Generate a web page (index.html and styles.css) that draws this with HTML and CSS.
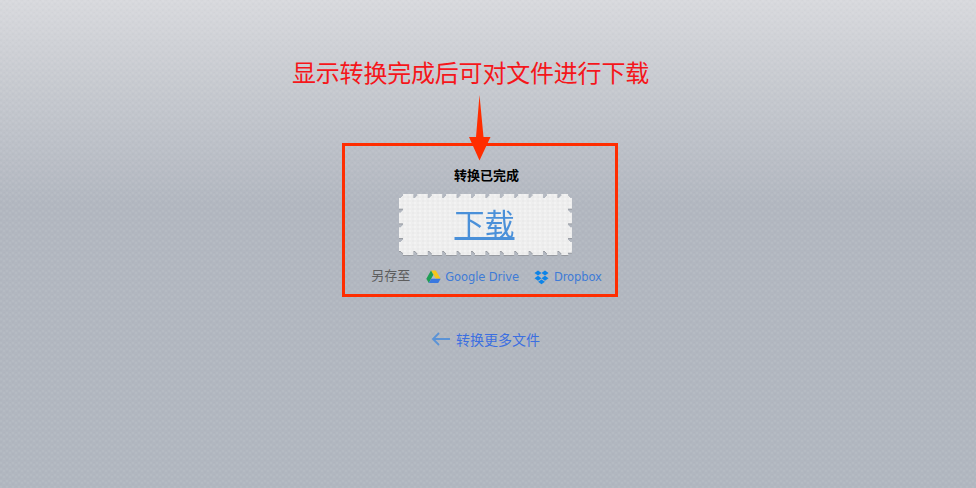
FILE: index.html
```html
<!DOCTYPE html>
<html lang="zh-CN">
<head>
<meta charset="utf-8">
<title>转换已完成</title>
<link rel="stylesheet" href="styles.css">
</head>
<body>
<main class="page">
  <h1 class="note">显示转换完成后可对文件进行下载</h1>
  <section class="box">
    <svg class="arrow" width="24" height="68" viewBox="0 0 24 68"><polygon points="10.500,0 14.500,42 21.500,42 10.500,65.500 0,42 7,42" fill="#ff2d00"/></svg>
    <p class="status">转换已完成</p>
    <a class="stamp" href="#"><span class="stamp-text">下载</span></a>
    <div class="saves">
      <span class="save-label">另存至</span>
      <a class="save" href="#">
        <svg width="15" height="14" viewBox="0 0 15 14"><polygon points="5,0.500 9.800,0.500 14.700,8.800 10,8.800" fill="#f6c61b"/><polygon points="5,0.500 7.400,4.700 2.800,13 0.300,8.800" fill="#1f9e55"/><polygon points="5.200,8.800 14.700,8.800 12.200,13 2.800,13" fill="#3a78e0"/></svg>
        Google Drive
      </a>
      <a class="save" href="#">
        <svg width="15" height="15" viewBox="0 0 15 15" fill="#0d84e8"><polygon points="4,0.500 7.500,3 4,5.500 0.500,3"/><polygon points="11,0.500 14.500,3 11,5.500 7.500,3"/><polygon points="4,5.700 7.500,8.200 4,10.700 0.500,8.200"/><polygon points="11,5.700 14.500,8.200 11,10.700 7.500,8.200"/><polygon points="7.500,9.400 10.900,11.700 7.500,14.200 4.100,11.700"/></svg>
        Dropbox
      </a>
    </div>
  </section>
  <a class="back" href="#">
    <svg width="19" height="14" viewBox="0 0 19 14" fill="none" stroke="#5b93d6" stroke-width="1.800"><path d="M19 7H2M8 1L2 7l6 6"/></svg>
    转换更多文件
  </a>
</main>
</body>
</html>
```
FILE: styles.css
```css
* { box-sizing: border-box; }
html, body { margin: 0; height: 100%; }
body {
  font-family: "DejaVu Sans", "Noto Sans CJK SC", sans-serif;
  background-color: #b1b7c0;
  background-image:
    radial-gradient(circle 1px at 1px 1px, rgba(255,255,255,.05) 99%, transparent),
    radial-gradient(circle 1px at 4px 3px, rgba(255,255,255,.05) 99%, transparent),
    radial-gradient(circle 1px at 1px 4px, rgba(60,70,90,.02) 99%, transparent),
    radial-gradient(circle 1px at 4px 0, rgba(60,70,90,.02) 99%, transparent),
    linear-gradient(#d8d9dd 0, #c6c9cf 90px, #b2b7c0 205px, #b1b7c0 100%);
  background-size: 6px 6px, 6px 6px, 6px 6px, 6px 6px, 100% 100%;
  overflow: hidden;
}
.page { display: flex; flex-direction: column; align-items: center; height: 488px; padding-top: 55px; }
.note {
  margin: 0 0 0 -35px;
  font-family: "Noto Sans CJK SC", sans-serif;
  font-size: 24px;
  line-height: 34px;
  font-weight: 400;
  letter-spacing: -.2px;
  color: #f5161b;
  white-space: nowrap;
}
.box {
  position: relative;
  width: 276px;
  height: 154px;
  margin: 54px 0 0 -16px;
  border: 3px solid #ff2d00;
  display: flex;
  flex-direction: column;
  align-items: center;
  padding: 20px 0 0 11px;
}
.arrow { position: absolute; left: 124px; top: -51px; }
.status { margin: 0 0 0 2px; font-family: "Noto Sans CJK SC", sans-serif; font-size: 13px; line-height: 18px; font-weight: 700; color: #000; }
.stamp {
  position: relative;
  margin-top: 10px;
  width: 173px;
  height: 61px;
  display: flex;
  justify-content: center;
  color: #4a90d9;
  font-family: "Noto Sans CJK SC", sans-serif;
  filter: drop-shadow(0 1px 0 rgba(90,90,90,.3));
}
.stamp::before {
  content: "";
  position: absolute;
  inset: 0;
  background-color: #eeeeee;
  background-image:
    radial-gradient(circle 1px at 1px 1px, rgba(255,255,255,.3) 99%, transparent),
    radial-gradient(circle 1px at 4px 3px, rgba(0,0,0,.015) 99%, transparent);
  background-size: 5px 4px, 5px 4px;
  -webkit-mask:
    radial-gradient(circle 4px at 0 0, transparent 96%, #000) 0 0 / 14.42px 100% repeat-x,
    radial-gradient(circle 4px at 0 100%, transparent 96%, #000) 0 0 / 14.42px 100% repeat-x,
    radial-gradient(circle 4px at 0 0, transparent 96%, #000) 0 0 / 100% 14.7px repeat-y,
    radial-gradient(circle 4px at 100% 0, transparent 96%, #000) 0 0 / 100% 14.7px repeat-y;
  -webkit-mask-composite: source-in;
  mask-composite: intersect;
}
.stamp-text { position: relative; margin-right: 2px; font-size: 30px; line-height: 56px; height: 56px; text-underline-offset: 2px; }
.saves { display: flex; align-items: center; margin: 11px 0 0 2px; font-size: 11.5px; line-height: 18px; letter-spacing: -.1px; }
.save-label { font-family: "Noto Sans CJK SC", sans-serif; font-size: 13px; letter-spacing: 0; color: #5e5e5e; margin: 0 16px 4px 0; }
.save { display: flex; align-items: center; gap: 4px; color: #3f7bd6; text-decoration: none; }
.save + .save { margin-left: 15px; gap: 5px; }
.back { display: flex; align-items: center; gap: 6px; margin: 33px 0 0 -5px; font-family: "Noto Sans CJK SC", sans-serif; font-size: 14px; line-height: 18px; color: #3c6fe0; text-decoration: none; }
```
